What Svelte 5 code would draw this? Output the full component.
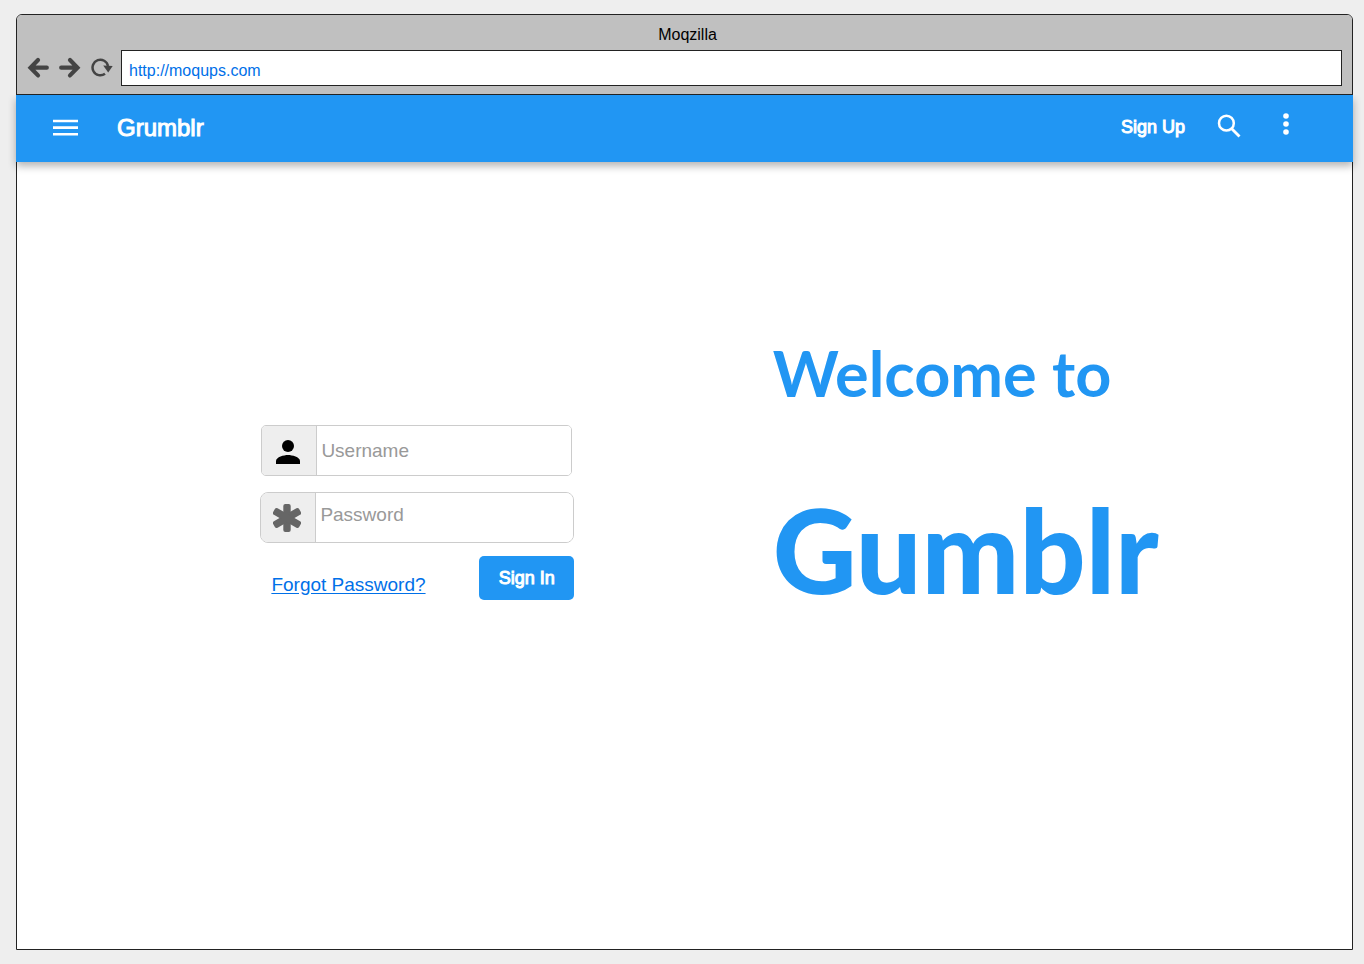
<script>
  let username = $state('');
  let password = $state('');
</script>

<div class="window">
  <header class="chrome">
    <div class="title">Moqzilla</div>
    <div class="toolbar">
      <button class="nav" aria-label="Back">
        <svg width="22" height="22" viewBox="0 0 22 22"><path d="M11 3L3.500 10.700l7.500 7.700M5 10.700h14.800" fill="none" stroke="#444" stroke-width="4.200" stroke-linecap="round" stroke-linejoin="miter" /></svg>
      </button>
      <button class="nav" aria-label="Forward">
        <svg width="22" height="22" viewBox="0 0 22 22"><path d="M11 3l7.500 7.700-7.500 7.700M17 10.700H2.200" fill="none" stroke="#444" stroke-width="4.200" stroke-linecap="round" stroke-linejoin="miter" /></svg>
      </button>
      <button class="nav" aria-label="Reload">
        <svg width="22" height="22" viewBox="0 0 22 22"><path d="M14 16.800A7.800 7.800 0 1 1 17 9" fill="none" stroke="#444" stroke-width="2.500" /><path d="M12.200 8.600l9.500 0.400-4.500 6.500z" fill="#444" /></svg>
      </button>
      <input class="address" type="text" aria-label="Address" value="http://moqups.com" />
    </div>
  </header>

  <nav class="appbar">
    <button class="icon" aria-label="Menu">
      <svg width="26" height="26" viewBox="0 0 26 26"><path d="M1 6h25M1 12.600h25M1 19.300h25" stroke="#fff" stroke-width="2.600" /></svg>
    </button>
    <a class="brand" href="#home">Grumblr</a>
    <a class="signup" href="#signup">Sign Up</a>
    <button class="icon search" aria-label="Search">
      <svg width="24" height="24" viewBox="0 0 24 24"><circle cx="9.400" cy="9.200" r="7.400" fill="none" stroke="#fff" stroke-width="2.500" /><path d="M14.500 14.500l8 8" stroke="#fff" stroke-width="2.800" /></svg>
    </button>
    <button class="icon more" aria-label="More options">
      <svg width="24" height="24" viewBox="0 0 24 24" fill="#fff"><circle cx="12" cy="4" r="2.800" /><circle cx="12" cy="12" r="2.800" /><circle cx="12" cy="20" r="2.800" /></svg>
    </button>
  </nav>

  <main>
    <form onsubmit={(e) => e.preventDefault()}>
      <div class="field user">
        <label for="username" aria-label="Username">
          <svg width="24" height="24" viewBox="0 0 24 24"><circle cx="12" cy="6" r="6" /><path d="M0 24v-3c0-4 8-6 12-6s12 2 12 6v3z" /></svg>
        </label>
        <input id="username" type="text" placeholder="Username" bind:value={username} />
      </div>
      <div class="field pass">
        <label for="password" aria-label="Password">
          <svg width="28" height="28" viewBox="0 0 28 28" fill="#666"><rect id="arm" x="10.300" width="7.400" height="28" rx="2" /><rect x="10.300" y="-1" width="7.400" height="30" rx="2" transform="rotate(60 14 14)" /><rect x="10.300" y="-1" width="7.400" height="30" rx="2" transform="rotate(-60 14 14)" /></svg>
        </label>
        <input id="password" type="password" placeholder="Password" bind:value={password} />
      </div>
      <div class="actions">
        <a href="#forgot">Forgot Password?</a>
        <button class="submit" type="submit">Sign In</button>
      </div>
    </form>
    <section class="hero">
      <p>Welcome to</p>
      <h1>Gumblr</h1>
    </section>
  </main>
</div>

<style>
  :global(body) {
    margin: 0;
    background: #eee;
    font-family: "Liberation Sans", Arial, sans-serif;
  }
  * { box-sizing: border-box; }
  button {
    padding: 0;
    border: 0;
    background: none;
    font: inherit;
    cursor: pointer;
  }
  svg { display: block; }
  .window {
    display: flex;
    flex-direction: column;
    min-height: calc(100vh - 28px);
    margin: 14px 11px 14px 16px;
    border: 1px solid #222;
    border-radius: 6px 6px 0 0;
    background: #fff;
  }
  .chrome {
    height: 80px;
    padding: 10px 10px 0;
    border-bottom: 1px solid #222;
    border-radius: 5px 5px 0 0;
    background: #c0c0c0;
  }
  .title {
    padding-left: 6px;
    font-size: 16px;
    line-height: 20px;
    text-align: center;
  }
  .toolbar {
    display: flex;
    align-items: center;
    gap: 10px;
    margin-top: 5px;
  }
  .address {
    flex: 1;
    min-width: 0;
    height: 36px;
    margin-left: -2px;
    padding: 5px 7px 0;
    border: 1px solid #222;
    border-radius: 0;
    background: #fff;
    color: #0070e8;
    font: 16px "Liberation Sans", Arial, sans-serif;
  }
  .appbar {
    display: flex;
    align-items: center;
    height: 67px;
    margin: 0 -1px;
    padding: 0 55px 2px 36px;
    background: #2196f3;
    box-shadow: 0 4px 8px rgba(0, 0, 0, 0.3);
    clip-path: inset(0 -8px -14px);
  }
  .appbar a {
    color: #fff;
    text-decoration: none;
    -webkit-text-stroke: 1px #fff;
  }
  .brand {
    margin-left: 39px;
    font-size: 24px;
  }
  .signup {
    margin-left: auto;
    font-size: 18px;
  }
  .search { margin: 0 33px 4px 32px; }
  .more { margin-bottom: 8px; }
  main {
    display: grid;
    grid-template-columns: 243fr 314px 198fr 384px 195fr;
    align-items: start;
    padding: 170px 0;
  }
  form {
    grid-column: 2;
    margin-top: 93px;
  }
  .field {
    display: flex;
    height: 51px;
    border: 1px solid #ccc;
    overflow: hidden;
  }
  .field label {
    display: flex;
    align-items: center;
    justify-content: center;
    flex: none;
    width: 55px;
    padding-right: 2px;
    border-right: 1px solid #ccc;
    background: #eee;
  }
  .field input {
    flex: 1;
    min-width: 0;
    padding: 0 4px;
    border: 0;
    outline: 0;
    background: #fff;
    font: 19px "Liberation Sans", Arial, sans-serif;
  }
  .field input::placeholder {
    color: #999;
    opacity: 1;
  }
  .user {
    margin: 0 2px 16px 1px;
    border-radius: 5px;
  }
  .user label { padding-top: 3px; }
  .pass { border-radius: 8px; }
  .pass input { padding-bottom: 6px; }
  .actions {
    display: flex;
    align-items: center;
    justify-content: space-between;
    margin-top: 13px;
    padding-left: 11px;
  }
  .actions a {
    padding-top: 13px;
    color: #0070e8;
    font-size: 19px;
    text-underline-offset: 2px;
  }
  .submit {
    width: 95px;
    height: 44px;
    border-radius: 5px;
    background: #2196f3;
    color: #fff;
    font-size: 18px;
    -webkit-text-stroke: 1px #fff;
  }
  .hero {
    grid-column: 4;
    color: #2196f3;
    white-space: nowrap;
  }
  .hero p {
    margin: 0;
    font: 700 63px/82px "Comic Sans MS", Lato, sans-serif;
  }
  .hero h1 {
    margin: 66px 0 0;
    font: 900 116px/140px Optima, Lato, sans-serif;
  }
</style>
